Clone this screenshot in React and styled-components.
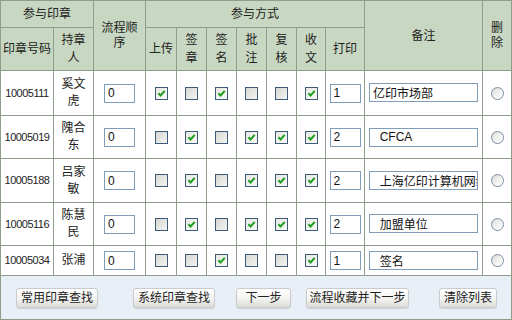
import React from 'react';
import styled, { createGlobalStyle } from 'styled-components';

const GlobalStyle = createGlobalStyle`
  html, body {
    margin: 0;
    padding: 0;
    background: #ffffff;
  }
  body {
    font-family: "Liberation Sans", "Noto Sans CJK SC", sans-serif;
    font-size: 12px;
    color: #222222;
  }
`;

const COLS = [53, 40, 52, 31, 30, 30, 30, 30, 29, 39, 118, 29];

const ROWS = [
  { code: '10005111', name: ['奚文', '虎'], order: '0', ways: [1, 0, 1, 0, 0, 1], print: '1', note: '亿印市场部', height: 45 },
  { code: '10005019', name: ['隗合', '东'], order: '0', ways: [0, 1, 0, 1, 1, 1], print: '2', note: '  CFCA', height: 43 },
  { code: '10005188', name: ['吕家', '敏'], order: '0', ways: [0, 1, 0, 1, 1, 1], print: '2', note: '  上海亿印计算机网络有限公司', height: 44 },
  { code: '10005116', name: ['陈慧', '民'], order: '0', ways: [0, 1, 0, 1, 1, 1], print: '2', note: '  加盟单位', height: 43 },
  { code: '10005034', name: ['张浦'], order: '0', ways: [0, 0, 1, 0, 0, 1], print: '1', note: '  签名', height: 30 },
];

const WAYS = [['上传'], ['签', '章'], ['签', '名'], ['批', '注'], ['复', '核'], ['收', '文']];

const BUTTONS = [
  { label: '常用印章查找', width: 82, gap: 0 },
  { label: '系统印章查找', width: 82, gap: 35 },
  { label: '下一步', width: 55, gap: 21 },
  { label: '流程收藏并下一步', width: 103, gap: 15 },
  { label: '清除列表', width: 58, gap: 30 },
];

const Lines = ({ parts }) => parts.map((p, i) => (
  <React.Fragment key={p}>
    {i > 0 && <br />}
    {p}
  </React.Fragment>
));

const Check = ({ checked }) => (
  <CheckBox $checked={checked}>
    {checked ? (
      <svg width="9" height="9" viewBox="0 0 9 9">
        <path d="M1.4 4.2 L3.6 6.5 L7.7 1.9" fill="none" stroke="#1e9e1e" strokeWidth="2" />
      </svg>
    ) : null}
  </CheckBox>
);

const App = () => (
  <>
    <GlobalStyle />
    <Grid>
      <colgroup>
        {COLS.map((w, i) => <col key={`c${i}`} style={{ width: w }} />)}
      </colgroup>
      <thead>
        <Row $h={27}>
          <Head colSpan={2}>参与印章</Head>
          <Head rowSpan={2} $tight>
            <Lines parts={['流程顺', '序']} />
          </Head>
          <Head colSpan={7}>参与方式</Head>
          <Head rowSpan={2}>备注</Head>
          <Head rowSpan={2} $tight>
            <Lines parts={['删', '除']} />
          </Head>
        </Row>
        <Row $h={43}>
          <Head>印章号码</Head>
          <Head><Lines parts={['持章', '人']} /></Head>
          {WAYS.map((w) => (
            <Head key={w.join('')}><Lines parts={w} /></Head>
          ))}
          <Head>打印</Head>
        </Row>
      </thead>
      <tbody>
        {ROWS.map((r) => (
          <Row key={r.code} $h={r.height}>
            <Code>{r.code}</Code>
            <Cell><Lines parts={r.name} /></Cell>
            <Cell><Field $w={31} defaultValue={r.order} /></Cell>
            {r.ways.map((v, i) => (
              <Cell key={`${r.code}w${i}`}><Check checked={!!v} /></Cell>
            ))}
            <Cell><Field $w={31} defaultValue={r.print} /></Cell>
            <Cell><Field $w={109} defaultValue={r.note} /></Cell>
            <Cell><Radio /></Cell>
          </Row>
        ))}
        <Row $h={44}>
          <Footer colSpan={12}>
            <ButtonBar>
              {BUTTONS.map((b) => (
                <Button key={b.label} type="button" $w={b.width} $gap={b.gap}>
                  {b.label}
                </Button>
              ))}
            </ButtonBar>
          </Footer>
        </Row>
      </tbody>
    </Grid>
  </>
);

const Grid = styled.table`
  width: 512px;
  table-layout: fixed;
  border-collapse: collapse;
  border: 1px solid #8e9e8b;
`;

const Row = styled.tr`
  height: ${({ $h }) => $h}px;
`;

const Head = styled.th`
  padding: 0;
  border: 1px solid #8e9e8b;
  background: #c7d7c1;
  font-weight: normal;
  font-size: 12px;
  line-height: ${({ $tight }) => ($tight ? '15px' : '18px')};
  color: #222222;
  text-align: center;
  vertical-align: middle;
`;

const Cell = styled.td`
  padding: 0;
  border: 1px solid #8e9e8b;
  text-align: center;
  vertical-align: middle;
  line-height: 17px;
  font-size: 12px;
`;

const Code = styled(Cell)`
  font-size: 11px;
  letter-spacing: -0.5px;
`;

const Footer = styled.td`
  padding: 0;
  border: 1px solid #8e9e8b;
  background: #e9eff6;
`;

const ButtonBar = styled.div`
  display: flex;
  align-items: center;
  padding-left: 15px;
`;

const Field = styled.input.attrs({ type: 'text' })`
  box-sizing: border-box;
  width: ${({ $w }) => $w}px;
  height: 19px;
  margin: 0;
  padding: 0 0 0 3px;
  border: 1px solid #7f9db9;
  font-family: "Liberation Sans", "Noto Sans CJK SC", sans-serif;
  font-size: 12px;
  color: #111111;
  background: #ffffff;
  outline: none;
  white-space: pre;
`;

const CheckBox = styled.span`
  box-sizing: border-box;
  display: inline-flex;
  align-items: center;
  justify-content: center;
  width: 13px;
  height: 13px;
  vertical-align: middle;
  border: 1px solid #3d5a78;
  background: ${({ $checked }) => ($checked
    ? 'linear-gradient(135deg, #e8e8e2 0%, #f8f8f6 100%)'
    : 'linear-gradient(135deg, #d6d6d2 0%, #f4f4f2 100%)')};
`;

const Radio = styled.span`
  box-sizing: border-box;
  display: inline-block;
  width: 13px;
  height: 13px;
  vertical-align: middle;
  border-radius: 50%;
  border: 1px solid #7d8ea4;
  background: linear-gradient(135deg, #dcdcd8 0%, #ffffff 90%);
`;

const Button = styled.button`
  box-sizing: border-box;
  width: ${({ $w }) => $w}px;
  height: 20px;
  margin: 0 0 0 ${({ $gap }) => $gap}px;
  padding: 0;
  border: 1px solid #c9cbcd;
  border-radius: 3px;
  background: linear-gradient(180deg, #ffffff 0%, #f2f2f0 55%, #dcdcd8 100%);
  box-shadow: 0 1px 1px rgba(0, 0, 0, 0.12);
  font-family: "Liberation Sans", "Noto Sans CJK SC", sans-serif;
  font-size: 12px;
  line-height: 18px;
  color: #222222;
  white-space: nowrap;
`;

export default App;
